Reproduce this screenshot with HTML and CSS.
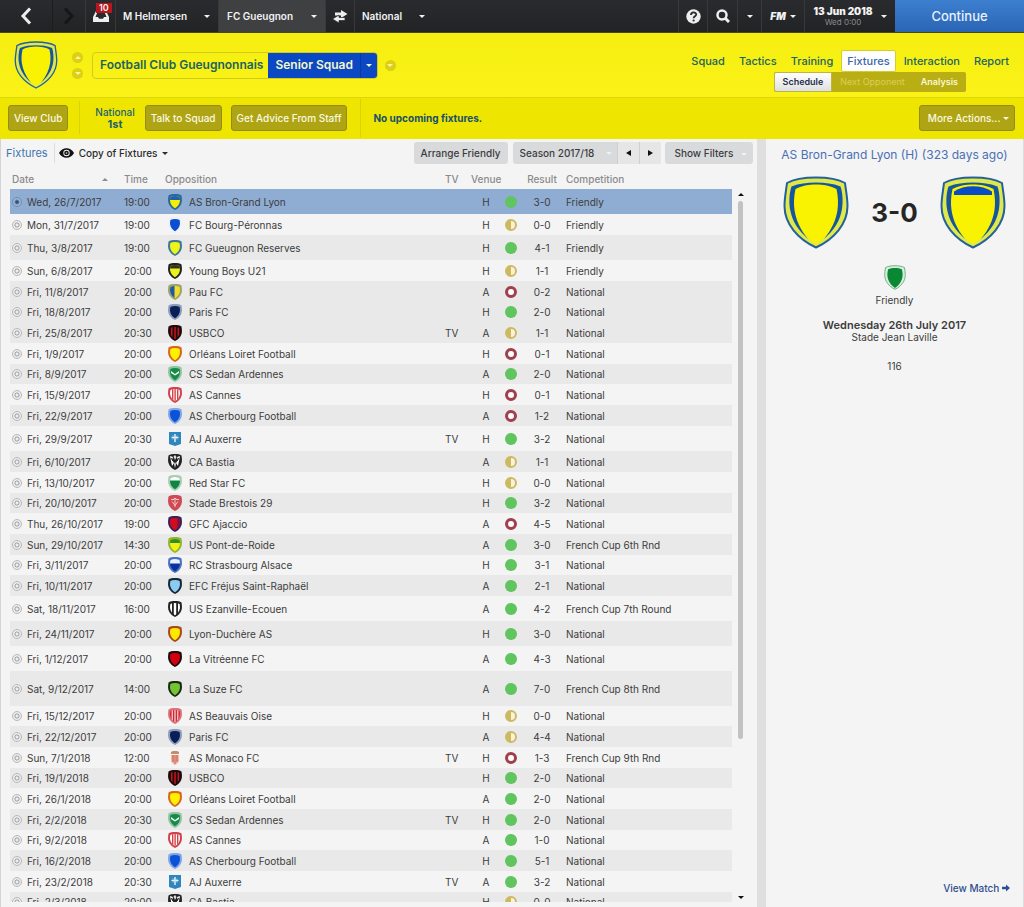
FILE: index.html
```html
<!DOCTYPE html>
<html lang="en">

<head>
  <meta charset="UTF-8">
  <meta name="viewport" content="width=device-width, initial-scale=1.0">
  <title>FC Gueugnon - Fixtures</title>
  <link rel="stylesheet" href="styles.css">
</head>

<body>
  <!-- club crests, used by the table and the match panel -->
  <svg class="defs" aria-hidden="true">
    <defs>
      <path id="outer" d="M7 0C4.500 0 2 .5 .5 1.400 .2 3.500 0 5 .1 7 .4 11 3.200 14.200 7 16c3.800-1.800 6.600-5 6.900-9 .1-2-.1-3.500-.4-5.600C12 .5 9.500 0 7 0z"/>
      <path id="inner" d="M7 2C5.200 2 3.600 2.300 2.400 2.900 2 5 1.900 6.200 2.200 7.800 2.700 10.600 4.600 12.800 7 14.200c2.400-1.400 4.300-3.600 4.800-6.400.3-1.600.2-2.800-.2-4.900C10.400 2.300 8.800 2 7 2z"/>
      <clipPath id="cut"><use href="#inner"/></clipPath>
    </defs>
    <symbol id="bron" viewBox="0 0 14 16"><use href="#outer" fill="#2c6796"/><use href="#inner" fill="#f5f000"/><path clip-path="url(#cut)" d="M0 0h14v6H0z" fill="#1f5fb8"/></symbol>
    <symbol id="bourg" viewBox="0 0 14 16"><use href="#outer" fill="#eef2f8"/><use href="#inner" fill="#0a4fd0"/></symbol>
    <symbol id="gueugnon" viewBox="0 0 14 16"><use href="#outer" fill="#3f7795"/><use href="#inner" fill="#eef51a"/></symbol>
    <symbol id="young" viewBox="0 0 14 16"><use href="#outer" fill="#222"/><use href="#inner" fill="#eaf21a"/><path clip-path="url(#cut)" d="M0 0h14v5.500H0z" fill="#333318"/></symbol>
    <symbol id="pau" viewBox="0 0 14 16"><use href="#outer" fill="#9aa36a"/><use href="#inner" fill="#f3dc27"/><path clip-path="url(#cut)" d="M0 0h6.500v16H0z" fill="#1c5aa8"/></symbol>
    <symbol id="paris" viewBox="0 0 14 16"><use href="#outer" fill="#8c9cba"/><use href="#inner" fill="#0b1f57"/></symbol>
    <symbol id="usbco" viewBox="0 0 14 16"><use href="#outer" fill="#1c0a0c"/><path clip-path="url(#cut)" d="M3 0h1.500v16H3zM6.300 0h1.500v16H6.300zM9.600 0h1.500v16H9.600z" fill="#c8141e"/></symbol>
    <symbol id="orleans" viewBox="0 0 14 16"><use href="#outer" fill="#d9661c"/><use href="#inner" fill="#fff000"/></symbol>
    <symbol id="sedan" viewBox="0 0 14 16"><use href="#outer" fill="#8fc5a2"/><use href="#inner" fill="#178a48"/><path d="M3 5l4 3 4-3v2L7 9.500 3 7z" fill="#fff"/></symbol>
    <symbol id="cannes" viewBox="0 0 14 16"><use href="#outer" fill="#d2404a"/><use href="#inner" fill="#fff"/><path clip-path="url(#cut)" d="M4 0h1.400v16H4zM6.400 0h1.400v16H6.400zM9 0h1.400v16H9z" fill="#d2404a"/></symbol>
    <symbol id="cherbourg" viewBox="0 0 14 16"><use href="#outer" fill="#7fa6e6"/><use href="#inner" fill="#0b52d6"/></symbol>
    <symbol id="auxerre" viewBox="0 0 14 16"><path d="M1 1h12v12l-6 2-6-2z" fill="#2f86bd"/><path d="M6.300 3h1.400v2.800H10.500v1.400H7.700V11H6.300V7.200H3.500V5.800h2.800z" fill="#e8f5fb"/><path d="M4.500 4.500l5 4m0-4l-5 4" stroke="#bfe0f0" stroke-width=".6"/></symbol>
    <symbol id="bastia" viewBox="0 0 14 16"><use href="#outer" fill="#222"/><path d="M2 2l3 1-1 3 2 3-2 3zM12 2L9 3l1 3-2 3 2 3z" fill="#fff"/><path d="M5.500 2.500L7 1l1.500 2L7 6zM6 10l1-2 1 2-1 4z" fill="#ddd"/><path d="M3 4l2 3M11 4L9 7" stroke="#222" stroke-width="1"/></symbol>
    <symbol id="redstar" viewBox="0 0 14 16"><use href="#outer" fill="#a9cdb5"/><use href="#inner" fill="#0f8742"/><path clip-path="url(#cut)" d="M0 0h14v5.500H0z" fill="#fff"/></symbol>
    <symbol id="brest" viewBox="0 0 14 16"><use href="#outer" fill="#cf4852"/><path d="M3 4.500h3V3.500h2v1h3M7 4v8M4 6.500l3 4 3-4" stroke="#f3c8cb" fill="none"/></symbol>
    <symbol id="ajaccio" viewBox="0 0 14 16"><use href="#outer" fill="#3d1e5c"/><use href="#inner" fill="#d20c1e"/><path clip-path="url(#cut)" d="M9.500 0H14v16H9z" fill="#7a1540"/></symbol>
    <symbol id="pont" viewBox="0 0 14 16"><use href="#outer" fill="#93b52c"/><use href="#inner" fill="#f0f212"/><path clip-path="url(#cut)" d="M0 0h14v6H0z" fill="#328c28"/></symbol>
    <symbol id="strasbourg" viewBox="0 0 14 16"><use href="#outer" fill="#4a72c4"/><use href="#inner" fill="#0d319c"/><path clip-path="url(#cut)" d="M0 0h14v6.500H0z" fill="#e9effc"/></symbol>
    <symbol id="frejus" viewBox="0 0 14 16"><use href="#outer" fill="#142738"/><use href="#inner" fill="#8ccbf0"/></symbol>
    <symbol id="ezanville" viewBox="0 0 14 16"><use href="#outer" fill="#222"/><path clip-path="url(#cut)" d="M2 0h2v16H2zM5.800 0h2.400v16H5.800zM10 0h2v16h-2z" fill="#fff"/></symbol>
    <symbol id="duchere" viewBox="0 0 14 16"><use href="#outer" fill="#a8471a"/><use href="#inner" fill="#ffe800"/></symbol>
    <symbol id="vitre" viewBox="0 0 14 16"><use href="#outer" fill="#1b0b0d"/><use href="#inner" fill="#d4000f"/></symbol>
    <symbol id="suze" viewBox="0 0 14 16"><use href="#outer" fill="#1a2a12"/><use href="#inner" fill="#72c433"/></symbol>
    <symbol id="beauvais" viewBox="0 0 14 16"><use href="#outer" fill="#de7077"/><use href="#inner" fill="#cf2834"/><path clip-path="url(#cut)" d="M3.700 0h1v16h-1zM6.500 0h1v16h-1zM9.300 0h1v16h-1z" fill="#fff"/></symbol>
    <symbol id="monaco" viewBox="0 0 14 16"><path d="M3 2l2-1h4l2 1v2H3z" fill="#c48b6c"/><path d="M3 5h8v5c0 2-2 4-4 5-2-1-4-3-4-5z" fill="#efb9a2"/><path d="M4.500 5h1v7h-1zM8.500 5h1v7h-1zM6.600 5h.8v9h-.8z" fill="#bd4f43"/></symbol>

    <symbol id="club" viewBox="0 0 66 73">
      <path d="M33 1.500C23 1.500 11 3 4 7 3 15 1.500 22 1.500 30c0 18 13.500 33 31.500 41.500 18-8.500 31.500-23.500 31.500-41.500 0-8-1.500-15-2.500-23C55 3 43 1.500 33 1.500z" fill="#dfe84c" stroke="#24619a" stroke-width="2"/>
      <path d="M33 8C24 8 16 9 10 12c-1 7-2 14-1 21 2 15 11 27 24 35 13-8 22-20 24-35 1-7 0-14-1-21-6-3-14-4-23-4z" fill="#f9f200"/>
      <path d="M8.500 10.500C16 7.500 24 6.500 33 6.500s17 1 24.500 4C60 18 60 27 59 33c-2 12-8 21-18 30 8-10 12-19 13.500-29 1-7 .5-14-1-21C48 9.800 40 8.500 33 8.500S18 9.800 12.500 13c-1.500 7-2 14-1 21C13 44 17 53 25 63 15 54 9 45 7 33c-1-6-1-15 1.500-22.500z" fill="#17559c"/>
    </symbol>
  </svg>

  <header class="topbar">
    <button class="top-item back" aria-label="Back">
      <svg width="12" height="18" viewBox="0 0 12 18"><path d="M10 1.500L3 9l7 7.500" fill="none" stroke="#eee" stroke-width="3"/></svg>
    </button>
    <button class="top-item forward" aria-label="Forward">
      <svg width="12" height="18" viewBox="0 0 12 18"><path d="M2 1.500L9 9l-7 7.500" fill="none" stroke="#151618" stroke-width="3"/></svg>
    </button>
    <button class="top-item inbox" aria-label="Inbox">
      <svg width="16" height="12" viewBox="0 0 16 12"><path d="M3 1h10l3 6v5H0V7z" fill="#eee"/><path d="M4.200 2.800h7.600L13.500 7H11l-1 1.800H6L5 7H2.500z" fill="#292a2c"/></svg>
      <span class="badge">10</span>
    </button>
    <button class="top-item manager">M Helmersen <i class="caret"></i></button>
    <button class="top-item team">FC Gueugnon <i class="caret"></i></button>
    <button class="top-item swap" aria-label="Switch">
      <svg width="16" height="13" viewBox="0 0 16 13"><path d="M9 0l6.500 4L9 8V5.500H3v-3h6z" fill="#eee"/><path d="M7 5L.5 9 7 13v-2.500h6v-3H7z" fill="#eee" stroke="#292a2c" stroke-width=".7"/></svg>
    </button>
    <button class="top-item league">National <i class="caret"></i></button>

    <div class="top-right">
      <button class="top-item help" aria-label="Help">
        <svg width="15" height="15" viewBox="0 0 15 15"><circle cx="7.500" cy="7.500" r="7.200" fill="#eee"/><path d="M5 6c0-3.400 5.200-3.200 5.200-.5C10.200 7.300 7.600 7.300 7.600 9.200" fill="none" stroke="#292a2c" stroke-width="1.800"/><circle cx="7.600" cy="11.500" r="1.100" fill="#292a2c"/></svg>
      </button>
      <button class="top-item search" aria-label="Search">
        <svg width="14" height="14" viewBox="0 0 14 14"><circle cx="6" cy="6" r="4.500" fill="none" stroke="#eee" stroke-width="2.500"/><path d="M9.300 9.300L13 13" stroke="#eee" stroke-width="3"/></svg>
      </button>
      <button class="top-item more" aria-label="Search options"><i class="caret"></i></button>
      <button class="top-item fm"><em>FM</em> <i class="caret"></i></button>
      <button class="top-item date">
        <span class="date-text"><strong>13 Jun 2018</strong><small>Wed 0:00</small></span>
        <i class="caret"></i>
      </button>
      <button class="continue">Continue</button>
    </div>
  </header>

  <section class="club-header">
    <svg class="club-crest"><use href="#club"/></svg>
    <div class="steps">
      <button class="round" aria-label="Previous club"><i class="caret up"></i></button>
      <button class="round" aria-label="Next club"><i class="caret"></i></button>
    </div>
    <div class="club-title">
      <h1>Football Club Gueugnonnais</h1>
      <button class="squad-button">Senior Squad</button>
      <button class="squad-menu" aria-label="Choose squad"><i class="caret"></i></button>
    </div>
    <button class="round" aria-label="Club menu"><i class="caret"></i></button>

    <div class="menus">
      <nav class="main-nav">
        <a href="#">Squad</a>
        <a href="#">Tactics</a>
        <a href="#">Training</a>
        <a href="#" class="active">Fixtures</a>
        <a href="#">Interaction</a>
        <a href="#">Report</a>
      </nav>
      <nav class="sub-nav">
        <a href="#" class="active">Schedule</a>
        <a href="#" class="off">Next Opponent</a>
        <a href="#">Analysis</a>
      </nav>
    </div>
  </section>

  <section class="actions">
    <button class="action">View Club</button>
    <div class="standing"><span>National</span><strong>1st</strong></div>
    <button class="action">Talk to Squad</button>
    <button class="action">Get Advice From Staff</button>
    <p class="upcoming">No upcoming fixtures.</p>
    <button class="action more-actions">More Actions... <i class="caret"></i></button>
  </section>

  <main>
    <section class="fixtures">
      <div class="toolbar">
        <h2>Fixtures</h2>
        <button class="view">
          <svg width="15" height="10" viewBox="0 0 15 10"><path d="M0 5C3-1.300 12-1.300 15 5 12 11.300 3 11.300 0 5z" fill="#111"/><circle cx="7.500" cy="5" r="3.200" fill="#f4f4f4"/><circle cx="7.500" cy="5" r="2.300" fill="#111"/><circle cx="7.500" cy="5" r=".8" fill="#ddd"/></svg>
          Copy of Fixtures <i class="caret"></i>
        </button>
        <button class="grey arrange">Arrange Friendly</button>
        <div class="season">
          <select aria-label="Season">
            <option>Season 2017/18</option>
          </select>
          <i class="caret"></i>
          <button aria-label="Previous season"><i class="caret left"></i></button>
          <button aria-label="Next season"><i class="caret right"></i></button>
        </div>
        <button class="grey filters">Show Filters <i class="caret"></i></button>
      </div>

      <div class="list">
        <div class="scroller">
          <table>
            <thead>
              <tr>
                <th class="c-date"><span>Date <i class="caret up"></i></span></th>
                <th class="c-time">Time</th>
                <th>Opposition</th>
                <th class="c-tv">TV</th>
                <th class="c-venue">Venue</th>
                <th class="c-dot"></th>
                <th class="c-result">Result</th>
                <th class="c-comp">Competition</th>
              </tr>
            </thead>
            <tbody id="rows"></tbody>
          </table>
        </div>
        <div class="scrollbar">
          <i class="caret up"></i>
          <div class="track"><div class="thumb"></div></div>
          <i class="caret"></i>
        </div>
      </div>
    </section>

    <aside class="match">
      <h2>AS Bron-Grand Lyon (H) (323 days ago)</h2>
      <div class="score">
        <svg class="big-crest"><use href="#club"/></svg>
        <strong>3-0</strong>
        <svg class="big-crest" viewBox="0 0 66 73"><use href="#club"/><path d="M14 19v-3.500c10-7 28-7 38 0V19z" fill="#0a4cc4"/></svg>
      </div>
      <svg class="cup" viewBox="0 0 22 25"><path d="M11 .7C8 .7 4 1.200 1.500 2.500 1 5 .7 8 .7 10.500 1 16.500 5 21.500 11 24.300c6-2.800 10-7.800 10.300-13.800 0-2.500-.3-5.500-.8-8C18 1.200 14 .7 11 .7z" fill="#d7ecdd" stroke="#6fb488"/><path d="M11 3C8.500 3 6 3.400 4.200 4.200 3 8 3.200 11 4 14c1.200 4 4 7 7 9 3-2 5.800-5 7-9 .8-3 1-6-.2-9.800C16 3.400 13.500 3 11 3z" fill="#0a8733"/></svg>
      <p class="kind">Friendly</p>
      <p class="day">Wednesday 26th July 2017</p>
      <p>Stade Jean Laville</p>
      <p class="crowd">116</p>
      <a href="#" class="view-match">View Match
        <svg width="8" height="8" viewBox="0 0 8 8"><path d="M0 2.800h4V.5L8 4 4 7.500V5.200H0z" fill="#2c4f96"/></svg>
      </a>
    </aside>
  </main>

  <script>
    // date, time, crest, opposition, tv, venue, outcome, result, competition, row class
    const fixtures = [
      ['Wed, 26/7/2017', '19:00', 'bron', 'AS Bron-Grand Lyon', '', 'H', 'win', '3-0', 'Friendly', 'selected'],
      ['Mon, 31/7/2017', '19:00', 'bourg', 'FC Bourg-Péronnas', '', 'H', 'draw', '0-0', 'Friendly'],
      ['Thu, 3/8/2017', '19:00', 'gueugnon', 'FC Gueugnon Reserves', '', 'H', 'win', '4-1', 'Friendly', 'tall'],
      ['Sun, 6/8/2017', '20:00', 'young', 'Young Boys U21', '', 'H', 'draw', '1-1', 'Friendly'],
      ['Fri, 11/8/2017', '20:00', 'pau', 'Pau FC', '', 'A', 'loss', '0-2', 'National'],
      ['Fri, 18/8/2017', '20:00', 'paris', 'Paris FC', '', 'H', 'win', '2-0', 'National', 'hover'],
      ['Fri, 25/8/2017', '20:30', 'usbco', 'USBCO', 'TV', 'A', 'draw', '1-1', 'National'],
      ['Fri, 1/9/2017', '20:00', 'orleans', 'Orléans Loiret Football', '', 'H', 'loss', '0-1', 'National'],
      ['Fri, 8/9/2017', '20:00', 'sedan', 'CS Sedan Ardennes', '', 'A', 'win', '2-0', 'National'],
      ['Fri, 15/9/2017', '20:00', 'cannes', 'AS Cannes', '', 'H', 'loss', '0-1', 'National'],
      ['Fri, 22/9/2017', '20:00', 'cherbourg', 'AS Cherbourg Football', '', 'A', 'loss', '1-2', 'National'],
      ['Fri, 29/9/2017', '20:30', 'auxerre', 'AJ Auxerre', 'TV', 'H', 'win', '3-2', 'National', 'tall'],
      ['Fri, 6/10/2017', '20:00', 'bastia', 'CA Bastia', '', 'A', 'draw', '1-1', 'National'],
      ['Fri, 13/10/2017', '20:00', 'redstar', 'Red Star FC', '', 'H', 'draw', '0-0', 'National'],
      ['Fri, 20/10/2017', '20:00', 'brest', 'Stade Brestois 29', '', 'H', 'win', '3-2', 'National'],
      ['Thu, 26/10/2017', '19:00', 'ajaccio', 'GFC Ajaccio', '', 'A', 'loss', '4-5', 'National'],
      ['Sun, 29/10/2017', '14:30', 'pont', 'US Pont-de-Roide', '', 'A', 'win', '3-0', 'French Cup 6th Rnd'],
      ['Fri, 3/11/2017', '20:00', 'strasbourg', 'RC Strasbourg Alsace', '', 'H', 'win', '3-1', 'National'],
      ['Fri, 10/11/2017', '20:00', 'frejus', 'EFC Fréjus Saint-Raphaël', '', 'A', 'win', '2-1', 'National'],
      ['Sat, 18/11/2017', '16:00', 'ezanville', 'US Ezanville-Ecouen', '', 'A', 'win', '4-2', 'French Cup 7th Round', 'tall'],
      ['Fri, 24/11/2017', '20:00', 'duchere', 'Lyon-Duchère AS', '', 'H', 'win', '3-0', 'National', 'tall'],
      ['Fri, 1/12/2017', '20:00', 'vitre', 'La Vitréenne FC', '', 'A', 'win', '4-3', 'National', 'tall'],
      ['Sat, 9/12/2017', '14:00', 'suze', 'La Suze FC', '', 'A', 'win', '7-0', 'French Cup 8th Rnd', 'taller'],
      ['Fri, 15/12/2017', '20:00', 'beauvais', 'AS Beauvais Oise', '', 'H', 'draw', '0-0', 'National'],
      ['Fri, 22/12/2017', '20:00', 'paris', 'Paris FC', '', 'A', 'draw', '4-4', 'National'],
      ['Sun, 7/1/2018', '12:00', 'monaco', 'AS Monaco FC', 'TV', 'H', 'loss', '1-3', 'French Cup 9th Rnd'],
      ['Fri, 19/1/2018', '20:00', 'usbco', 'USBCO', '', 'H', 'win', '2-0', 'National'],
      ['Fri, 26/1/2018', '20:00', 'orleans', 'Orléans Loiret Football', '', 'A', 'win', '2-0', 'National'],
      ['Fri, 2/2/2018', '20:30', 'sedan', 'CS Sedan Ardennes', 'TV', 'H', 'win', '2-0', 'National'],
      ['Fri, 9/2/2018', '20:00', 'cannes', 'AS Cannes', '', 'A', 'win', '1-0', 'National'],
      ['Fri, 16/2/2018', '20:00', 'cherbourg', 'AS Cherbourg Football', '', 'H', 'win', '5-1', 'National'],
      ['Fri, 23/2/2018', '20:30', 'auxerre', 'AJ Auxerre', 'TV', 'A', 'win', '3-2', 'National'],
      ['Fri, 2/3/2018', '20:00', 'bastia', 'CA Bastia', '', 'H', 'draw', '0-0', 'National']
    ];

    document.getElementById('rows').innerHTML = fixtures.map(([date, time, crest, name, tv, venue, outcome, result, comp, cls = '']) => `
      <tr class="${cls}">
        <td><label class="day-pick"><input type="radio" name="match" ${cls.includes('selected') ? 'checked' : ''}>${date}</label></td>
        <td>${time}</td>
        <td><span class="opp"><svg class="crest"><use href="#${crest}"/></svg>${name}</span></td>
        <td>${tv}</td>
        <td class="c-venue">${venue}</td>
        <td class="c-dot"><span class="dot ${outcome}"></span></td>
        <td class="c-result">${result}</td>
        <td>${comp}</td>
      </tr>`).join('');
  </script>
</body>

</html>
```
FILE: styles.css
```css
* {
  margin: 0;
  padding: 0;
  box-sizing: border-box;
}

body {
  font-family: Inter, 'Liberation Sans', sans-serif;
  font-size: 10px;
  line-height: 12px;
  color: #3c3c3c;
  background-color: #dfdfdf;
  height: 100vh;
  display: flex;
  flex-direction: column;
  overflow: hidden;
}

button,
select {
  font: inherit;
  color: inherit;
  border: none;
  background: none;
  cursor: pointer;
  white-space: nowrap;
}

a {
  text-decoration: none;
  color: inherit;
}

.defs {
  position: absolute;
  width: 0;
  height: 0;
}

.caret {
  display: inline-block;
  flex: none;
  width: 0;
  height: 0;
  border: 3px solid transparent;
  border-top-color: currentColor;
  border-bottom-width: 0;
  vertical-align: middle;
}

.caret.up {
  border-top-width: 0;
  border-bottom: 3px solid currentColor;
}

.caret.left {
  border: 3px solid transparent;
  border-left-width: 0;
  border-right: 5px solid currentColor;
}

.caret.right {
  border: 3px solid transparent;
  border-right-width: 0;
  border-left: 5px solid currentColor;
}

/* top bar */
.topbar {
  display: flex;
  height: 33px;
  flex: none;
  background: linear-gradient(#2a2b2e, #222325);
  border-bottom: 1px solid #4a4710;
  color: #f2f2f2;
  font-weight: 600;
}

.top-item {
  display: flex;
  align-items: center;
  justify-content: center;
  border-right: 1px solid #38393b;
}

.back {
  width: 53px;
  border-right-color: #1c1d1f;
}

.forward {
  width: 33px;
}

.inbox {
  position: relative;
  width: 30px;
}

.badge {
  position: absolute;
  top: 3px;
  left: 10px;
  padding: 0 3px;
  background-color: #b8161c;
  font-size: 9px;
  line-height: 10px;
}

.manager,
.team,
.league {
  justify-content: space-between;
  padding: 0 8px 0 7px;
}

.manager {
  width: 103px;
}

.team {
  width: 107px;
  padding-left: 8px;
  background-color: #3f4042;
}

.swap {
  width: 29px;
}

.league {
  width: 78px;
  border-right: none;
}

.top-right {
  display: flex;
  margin-left: auto;
}

.help {
  width: 30px;
  border-left: 1px solid #38393b;
}

.search {
  width: 30px;
}

.more {
  width: 24px;
}

.fm {
  width: 43px;
  gap: 4px;
}

.fm em {
  font-size: 10px;
  font-weight: 900;
}

.date {
  width: 90px;
  gap: 8px;
  border-right: none;
}

.date-text strong,
.date-text small {
  display: block;
}

.date-text small {
  font-size: 8px;
  line-height: 10px;
  font-weight: 400;
  color: #8a8a8a;
}

.continue {
  width: 129px;
  background: linear-gradient(#3d7fcf, #2a65b4);
  color: #e8f1fb;
  font-size: 13px;
  font-weight: 500;
}

/* club header */
.club-header {
  display: flex;
  align-items: center;
  height: 65px;
  flex: none;
  padding: 0 14px;
  background: linear-gradient(#f5ee10, #fbf318);
  border-bottom: 1px solid #ddd60a;
}

.club-crest {
  width: 44px;
  height: 48px;
}

.steps {
  display: flex;
  flex-direction: column;
  gap: 5px;
  margin: 0 9px 0 14px;
}

.round {
  display: flex;
  align-items: center;
  justify-content: center;
  width: 11px;
  height: 11px;
  border-radius: 50%;
  background-color: #dccf16;
  color: #fbf6a8;
}

.club-title {
  display: flex;
  height: 27px;
  margin-right: 7px;
  border: 1px solid #d3cb1a;
  border-radius: 4px;
  overflow: hidden;
  font-size: 12px;
  font-weight: 600;
}

.club-title h1 {
  padding: 0 5px 0 7px;
  font-size: 12px;
  font-weight: 600;
  line-height: 24px;
  color: #1c6460;
}

.squad-button,
.squad-menu {
  background-color: #0b48c4;
  color: #f4f7c8;
}

.squad-button {
  padding: 0 7px;
}

.squad-menu {
  width: 17px;
  border-left: 1px solid #083a9f;
  display: flex;
  align-items: center;
  justify-content: center;
}

.menus {
  display: flex;
  flex-direction: column;
  margin-left: auto;
  padding-top: 11px;
}

.main-nav {
  display: flex;
  gap: 2px;
  font-size: 11px;
  font-weight: 500;
  color: #1b6460;
}

.main-nav a {
  padding: 0 5px;
  line-height: 20px;
  border: 1px solid transparent;
}

.main-nav a:last-child {
  padding-right: 0;
}

.main-nav .active {
  background-color: #fff;
  border-color: #d5ce2a;
  border-radius: 2px;
  color: #3a66ae;
}

.sub-nav {
  display: flex;
  align-self: flex-end;
  margin-right: 44px;
  border-radius: 2px;
  background-color: #b9ae14;
  color: #fbf8d8;
  font-size: 9px;
  font-weight: 600;
}

.sub-nav a {
  padding: 0 8px;
  line-height: 20px;
}

.sub-nav .active {
  background: linear-gradient(#fff, #dfe0e2);
  border: 1px solid #bdb53c;
  border-radius: 2px 0 0 2px;
  line-height: 18px;
  color: #26304a;
}

.sub-nav .off {
  font-weight: 400;
  color: #d9cf55;
}

/* action bar */
.actions {
  display: flex;
  align-items: center;
  height: 41px;
  flex: none;
  gap: 9px;
  padding: 0 9px 2px 8px;
  background-color: #eee600;
  font-weight: 500;
  color: #1f6270;
}

.action {
  height: 26px;
  padding: 0 5px;
  border: 1px solid #958c18;
  border-radius: 3px;
  background-color: #afa414;
  color: #fbfae0;
}

.standing {
  text-align: center;
  margin-left: 2px;
  padding: 5px 1px 4px 15px;
  border-left: 1px solid #dad205;
}

.standing span,
.standing strong {
  display: block;
}

.standing strong {
  font-size: 11px;
  font-weight: 700;
}

.upcoming {
  margin-left: 4px;
  padding: 13px 12px;
  border-left: 1px solid #dad205;
  font-weight: 700;
  color: #17506a;
}

.more-actions {
  margin-left: auto;
  padding-left: 8px;
}

/* fixtures list */
main {
  display: flex;
  flex: 1;
  min-height: 0;
  gap: 9px;
}

.fixtures {
  display: flex;
  flex-direction: column;
  flex: 1;
  min-width: 0;
  padding-bottom: 5px;
  border-left: 1px solid #d4d4d4;
  background-color: #f4f4f4;
}

.toolbar {
  display: flex;
  align-items: center;
  height: 30px;
  flex: none;
  padding: 0 4px 2px 5px;
  font-weight: 500;
}

.toolbar h2 {
  padding-right: 6px;
  border-right: 1px solid #ddd;
  line-height: 20px;
  font-size: 11px;
  font-weight: 400;
  color: #3f74b0;
}

.view {
  display: flex;
  align-items: center;
  gap: 5px;
  padding-left: 4px;
  color: #2c2c2c;
}

.grey,
.season {
  height: 22px;
  border-radius: 3px;
  background-color: #d9dadc;
}

.grey {
  padding: 0 7px;
}

.arrange {
  margin-left: auto;
}

.season {
  display: flex;
  align-items: center;
  margin: 0 4px 0 5px;
  overflow: hidden;
}

.season select {
  appearance: none;
  width: 93px;
  padding-left: 7px;
}

.season button {
  display: flex;
  align-items: center;
  justify-content: center;
  width: 22px;
  height: 22px;
  border-left: 1px solid #cfcfcf;
  background-color: #e6e6e6;
  color: #111;
}

.season > .caret,
.filters .caret {
  color: #f0f0f0;
  margin-right: 5px;
}

.filters {
  padding: 0 1px 0 10px;
}

.filters .caret {
  margin-left: 5px;
}

.list {
  display: flex;
  flex: 1;
  min-height: 0;
  padding-left: 9px;
}

.scroller {
  flex: 1;
  overflow: hidden;
}

table {
  width: 100%;
  table-layout: fixed;
  border-collapse: collapse;
}

th {
  height: 20px;
  text-align: left;
  font-weight: 500;
  color: #8b8b8b;
}

.c-date {
  width: 114px;
}

.c-date span {
  display: flex;
  align-items: center;
  justify-content: space-between;
  padding: 0 16px 0 2px;
}

.c-time {
  width: 41px;
}

.c-tv {
  width: 26px;
}

.c-venue {
  width: 30px;
  text-align: center;
}

.c-dot {
  width: 20px;
}

.c-result {
  width: 45px;
  padding-right: 3px;
  text-align: center;
}

.c-comp {
  width: 166px;
}

td {
  height: 21px;
  white-space: nowrap;
}

tbody tr:nth-child(3n) td {
  height: 20px;
}

tbody tr:nth-child(odd),
tbody .hover {
  background-color: #e9e9e9;
}

tbody .tall td,
tbody .tall:nth-child(3n) td {
  height: 25px;
}

tbody .taller td {
  height: 35px;
}

tbody tr.selected:nth-child(odd) {
  background-color: #8fadd2;
}

tbody .selected td {
  height: 25px;
}

.day-pick {
  display: flex;
  align-items: center;
  gap: 5px;
  padding-left: 2px;
}

.day-pick input {
  appearance: none;
  width: 10px;
  height: 10px;
  border: 1px solid #b8b8b8;
  border-radius: 50%;
  background: radial-gradient(circle, #eee 1px, #a0a0a0 2px, #a0a0a0 2px, #eee 3px);
}

.day-pick input:checked {
  border-color: #7089ae;
  background: radial-gradient(circle, #2b4f80 1px, #9fb7d6 3px);
}

.opp {
  display: flex;
  align-items: center;
  gap: 7px;
  padding-left: 3px;
}

.crest {
  width: 14px;
  height: 16px;
}

.dot {
  display: block;
  width: 12px;
  height: 12px;
  margin: 0 auto;
  border-radius: 50%;
}

.win {
  background-color: #60c45f;
}

.draw {
  border: 2px solid #cdb95f;
  background: linear-gradient(90deg, #cdb95f 50%, #f7f3df 50%);
}

.loss {
  border: 3px solid #a0404c;
  background-color: #fff;
}

.scrollbar {
  display: flex;
  flex-direction: column;
  align-items: center;
  width: 17px;
  margin: 24px 8px 3px 0;
  color: #111;
}

.track {
  flex: 1;
  width: 5px;
  margin: 5px 0;
}

.thumb {
  height: 78%;
  border-radius: 3px;
  background-color: #c2c2c2;
}

/* match panel */
.match {
  display: flex;
  flex-direction: column;
  align-items: center;
  width: 258px;
  padding: 8px 0 13px;
  background-color: #f4f4f4;
  border-right: 1px solid #ddd;
}

.match h2 {
  font-size: 12px;
  line-height: 16px;
  font-weight: 400;
  color: #4a70b4;
}

.score {
  display: flex;
  align-items: center;
  gap: 22px;
  margin-top: 13px;
}

.big-crest {
  width: 66px;
  height: 73px;
}

.score strong {
  font-size: 26px;
  line-height: 32px;
  font-weight: 700;
  color: #262626;
}

.cup {
  width: 22px;
  height: 25px;
  margin: 16px 0 4px;
}

.kind {
  margin-bottom: 13px;
}

.day {
  font-size: 11px;
  font-weight: 600;
}

.crowd {
  margin-top: 17px;
}

.view-match {
  margin: auto 13px 0 auto;
  font-weight: 500;
  color: #2f4f90;
}
```
